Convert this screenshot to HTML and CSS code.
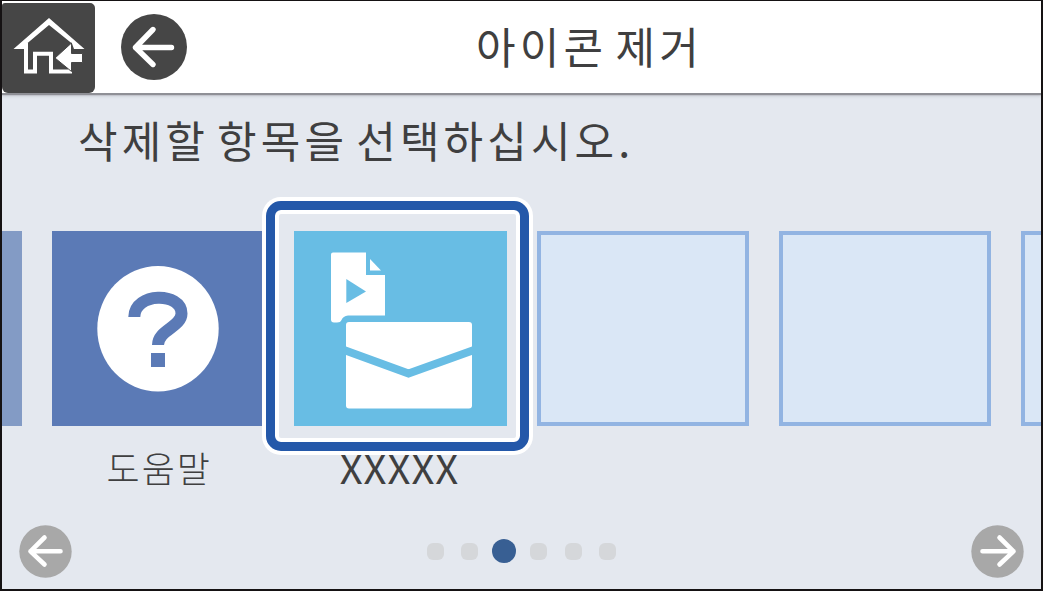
FILE: index.html
```html
<!DOCTYPE html>
<html lang="ko">
<head>
  <meta charset="UTF-8">
  <meta name="viewport" content="width=device-width, initial-scale=1.0">
  <title>아이콘 제거</title>
  <link rel="stylesheet" href="styles.css">
</head>
<body>
  <div class="screen">
    <header class="header">
      <button class="home-button" aria-label="홈">
        <svg width="93" height="90" viewBox="2 3 93 90">
          <path d="M13.5 49 L49 18 L84.5 49 L74 49 L72 43.5 L49 25 L27 43.5 L25 49 Z" fill="#fff"/>
          <path d="M26 43 V71.5 H35 V53.8 H51 V71.5 H70 V66" fill="none" stroke="#fff" stroke-width="4"/>
          <path d="M55 58 L71.5 43 V53.5 H82.5 V62.5 H71.5 V71.5 Z" fill="#fff" stroke="#464646" stroke-width="1"/>
        </svg>
      </button>
      <button class="back-button" aria-label="뒤로">
        <svg width="66" height="66" viewBox="0 0 66 66">
          <circle cx="33" cy="33" r="33" fill="#464646"/>
          <path d="M32 15.5 L14.5 33.5 L32 50.5 M14.5 33.5 H50.5" fill="none" stroke="#fff" stroke-width="5.4" stroke-linecap="round" stroke-linejoin="round"/>
        </svg>
      </button>
      <h1 class="title">아이콘 제거</h1>
    </header>

    <p class="message">삭제할 항목을 선택하십시오.</p>

    <div class="tiles">
      <div class="item">
        <div class="tile previous"></div>
      </div>
      <div class="item">
        <div class="tile help">
          <svg width="212" height="195" viewBox="52 231 212 195">
            <ellipse cx="158" cy="328.7" rx="60.7" ry="62.8" fill="#fff"/>
            <path d="M134.3 317 C134.5 292 181.5 292 181.5 313.5 C181.5 327 158 330 158 345" fill="none" stroke="#5b7ab6" stroke-width="12"/>
            <rect x="151" y="353" width="14" height="14" fill="#5b7ab6"/>
          </svg>
        </div>
        <div class="label">도움말</div>
      </div>
      <div class="item">
        <div class="tile mail">
          <svg width="212" height="195" viewBox="294 231 212 195">
            <path d="M333 252.5 H366 V275 H385 V315.5 H348 Q343 316 341.5 320 Q340.5 322.5 337 322.5 H334 Q331 322.5 331 319.5 V254.5 Q331 252.5 333 252.5 Z" fill="#fff"/>
            <path d="M370 259 L381 270.5 H370 Z" fill="#fff"/>
            <path d="M346.3 279 L366 291.5 L346.3 303 Z" fill="#68bde4"/>
            <rect x="346" y="322" width="126" height="86.5" rx="3" fill="#fff"/>
            <path d="M344 350 L408.5 373.5 L474 350" fill="none" stroke="#68bde4" stroke-width="7.8"/>
          </svg>
          <div class="selection"></div>
        </div>
        <div class="label latin">XXXXX</div>
      </div>
      <div class="item">
        <div class="tile empty"></div>
      </div>
      <div class="item">
        <div class="tile empty"></div>
      </div>
      <div class="item">
        <div class="tile empty"></div>
      </div>
    </div>

    <footer class="footer">
      <button class="page-button" aria-label="이전">
        <svg width="53" height="53" viewBox="0 0 53 53">
          <circle cx="26.5" cy="26.5" r="26.2" fill="#a8a8a8"/>
          <path d="M25.5 12.5 L11.5 26.3 L25.5 39.5 M11.5 26.3 H41.5" fill="none" stroke="#fff" stroke-width="4.6" stroke-linecap="round" stroke-linejoin="round"/>
        </svg>
      </button>
      <div class="dots">
        <span class="dot"></span>
        <span class="dot"></span>
        <span class="dot active"></span>
        <span class="dot"></span>
        <span class="dot"></span>
        <span class="dot"></span>
      </div>
      <button class="page-button" aria-label="다음">
        <svg width="53" height="53" viewBox="0 0 53 53">
          <circle cx="26.5" cy="26.5" r="26.2" fill="#a8a8a8"/>
          <path d="M28.5 12.5 L42.5 26.3 L28.5 39.5 M42.5 26.3 H11.5" fill="none" stroke="#fff" stroke-width="4.6" stroke-linecap="round" stroke-linejoin="round"/>
        </svg>
      </button>
    </footer>
  </div>
</body>
</html>
```
FILE: styles.css
```css
* {
  box-sizing: border-box;
}

body {
  margin: 0;
  font-family: "Noto Sans CJK KR", sans-serif;
  color: #3f3f40;
}

button {
  padding: 0;
  border: none;
  background: none;
  cursor: pointer;
}

svg {
  display: block;
}

.screen {
  display: flex;
  flex-direction: column;
  width: 1043px;
  height: 591px;
  border: 2px solid #151213;
  border-top-width: 1px;
  background-color: #e4e8ef;
  overflow: hidden;
}

.header {
  display: flex;
  align-items: center;
  height: 92px;
  flex: none;
  background-color: #fff;
  box-shadow: 0 1px 1px 1px #8f9096, 0 3px 3px #c3c6cd;
}

.home-button {
  width: 93px;
  height: 90px;
  margin-top: 2px;
  border-radius: 3px 5px 6px 6px;
  background-color: #464646;
}

.back-button {
  margin-left: 26px;
}

.title {
  margin: 0 0 4px 289px;
  font-size: 43px;
  line-height: 60px;
  font-weight: 400;
  letter-spacing: 4.2px;
  word-spacing: -8px;
  white-space: nowrap;
}

.message {
  margin: 16px 0 0 76px;
  height: 60px;
  font-size: 43px;
  line-height: 60px;
  letter-spacing: 4.1px;
  word-spacing: -8px;
  white-space: nowrap;
}

.tiles {
  display: flex;
  gap: 30px;
  margin: 62px 0 0 -192px;
  height: 270px;
}

.item {
  flex: none;
  width: 212.2px;
}

.tile {
  position: relative;
  height: 195px;
}

.previous {
  background-color: #839bc5;
}

.help {
  background-color: #5b7ab6;
}

.mail {
  background-color: #68bde4;
}

.empty {
  border: 4px solid #92b4e2;
  background-color: #dae7f6;
}

/* frame around the selected icon */
.selection {
  position: absolute;
  z-index: 1;
  top: -30px;
  left: -28px;
  width: 263px;
  height: 250px;
  border: 9px solid #2458a9;
  border-radius: 15px;
  box-shadow: 0 0 0 4px #fff, inset 0 0 0 4px #fff;
}

.label {
  margin-top: 16px;
  font-size: 36px;
  line-height: 50px;
  font-weight: 300;
  letter-spacing: 2px;
  text-indent: 2px;
  text-align: center;
}

.latin {
  font-size: 40px;
  font-weight: 400;
  letter-spacing: 1px;
  margin-left: -4px;
}

.footer {
  display: flex;
  align-items: center;
  justify-content: space-between;
  margin: 24px 17px 0;
}

.dots {
  display: flex;
  align-items: center;
  gap: 17.6px;
}

.dot {
  width: 17px;
  height: 17px;
  border-radius: 6px;
  background-color: #d5d7da;
}

.active {
  width: 24px;
  height: 24px;
  margin: -2px -3.5px 0;
  border-radius: 50%;
  background-color: #385f93;
}
```
